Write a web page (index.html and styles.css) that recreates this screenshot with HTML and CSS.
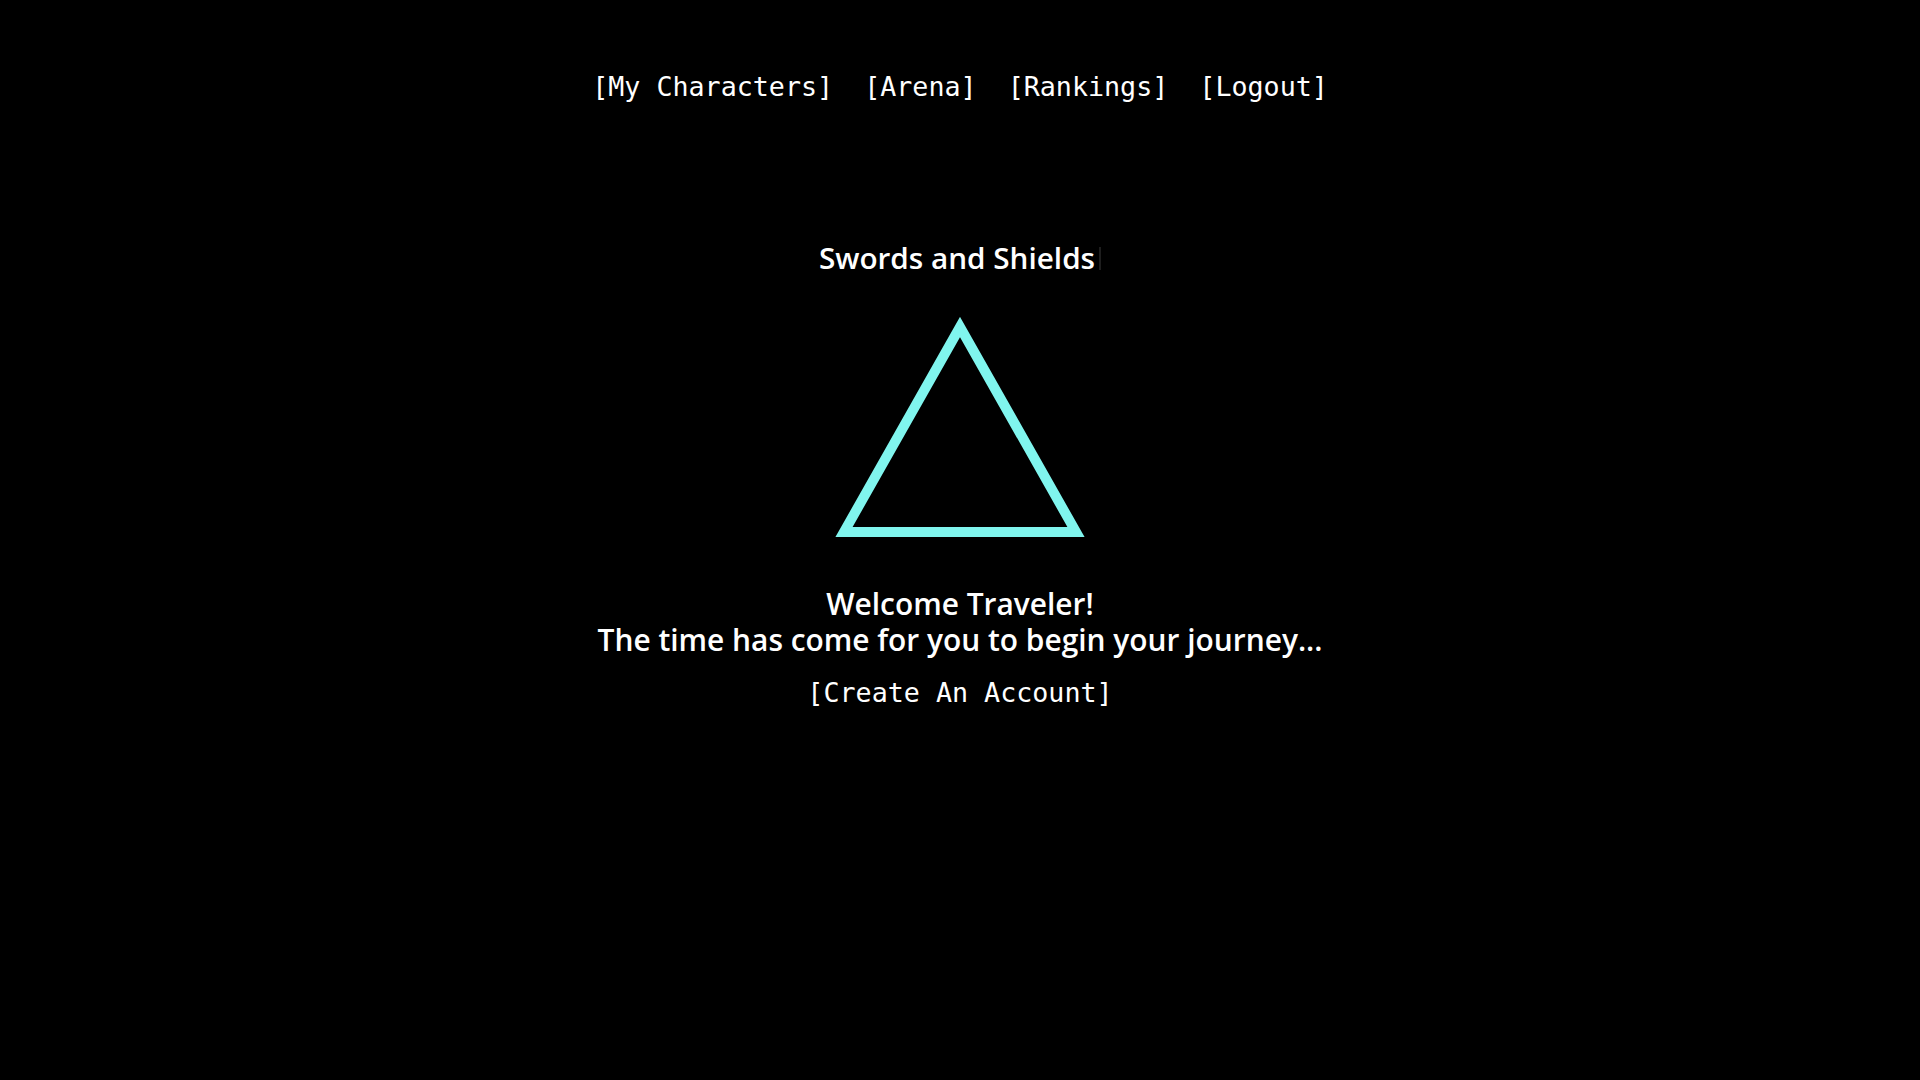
FILE: index.html
```html
<!DOCTYPE html>
<html lang="en">
<head>
<meta charset="utf-8">
<title>Swords and Shields</title>
<link rel="stylesheet" href="styles.css">
</head>
<body>
<div class="page">
  <nav class="nav">
    <a class="link" href="#">[My Characters]</a>
    <a class="link" href="#">[Arena]</a>
    <a class="link" href="#">[Rankings]</a>
    <a class="link" href="#">[Logout]</a>
  </nav>
  <h1 class="title">Swords and Shields<span class="caret"></span></h1>
  <svg class="logo" width="250" height="220" viewBox="0 0 250 220">
    <polygon points="125,10 9,215 241,215" fill="none" stroke="#80f5ee" stroke-width="10" stroke-linejoin="miter"/>
  </svg>
  <div class="welcome">
    <p class="line">Welcome Traveler!</p>
    <p class="line">The time has come for you to begin your journey...</p>
  </div>
  <a class="link create" href="#">[Create An Account]</a>
</div>
</body>
</html>
```
FILE: styles.css
```css
html, body {
  margin: 0;
  padding: 0;
  background: #000;
  color: #fff;
}

.page {
  display: flex;
  flex-direction: column;
  align-items: center;
  min-height: 1080px;
}

.nav {
  display: flex;
  gap: 31px;
  padding-top: 71px;
  line-height: 32px;
}

.link {
  font-family: "DejaVu Sans Mono", "Liberation Mono", monospace;
  font-size: 26.7px;
  line-height: 32px;
  color: #fff;
  text-decoration: none;
}

.title {
  margin: 135px 0 0;
  font-family: "Open Sans", "Noto Sans", sans-serif;
  font-weight: 600;
  font-size: 29.7px;
  line-height: 40px;
  display: flex;
  align-items: center;
}

.caret {
  display: inline-block;
  width: 2px;
  height: 23px;
  margin-left: 4px;
  background: #1e1e1e;
}

.logo {
  display: block;
  margin-top: 39px;
}

.welcome {
  margin-top: 49px;
  text-align: center;
  font-family: "Open Sans", "Noto Sans", sans-serif;
  font-weight: 600;
  font-size: 29.9px;
  line-height: 36px;
}

.line {
  margin: 0;
}

.create {
  margin-top: 19px;
}
```
